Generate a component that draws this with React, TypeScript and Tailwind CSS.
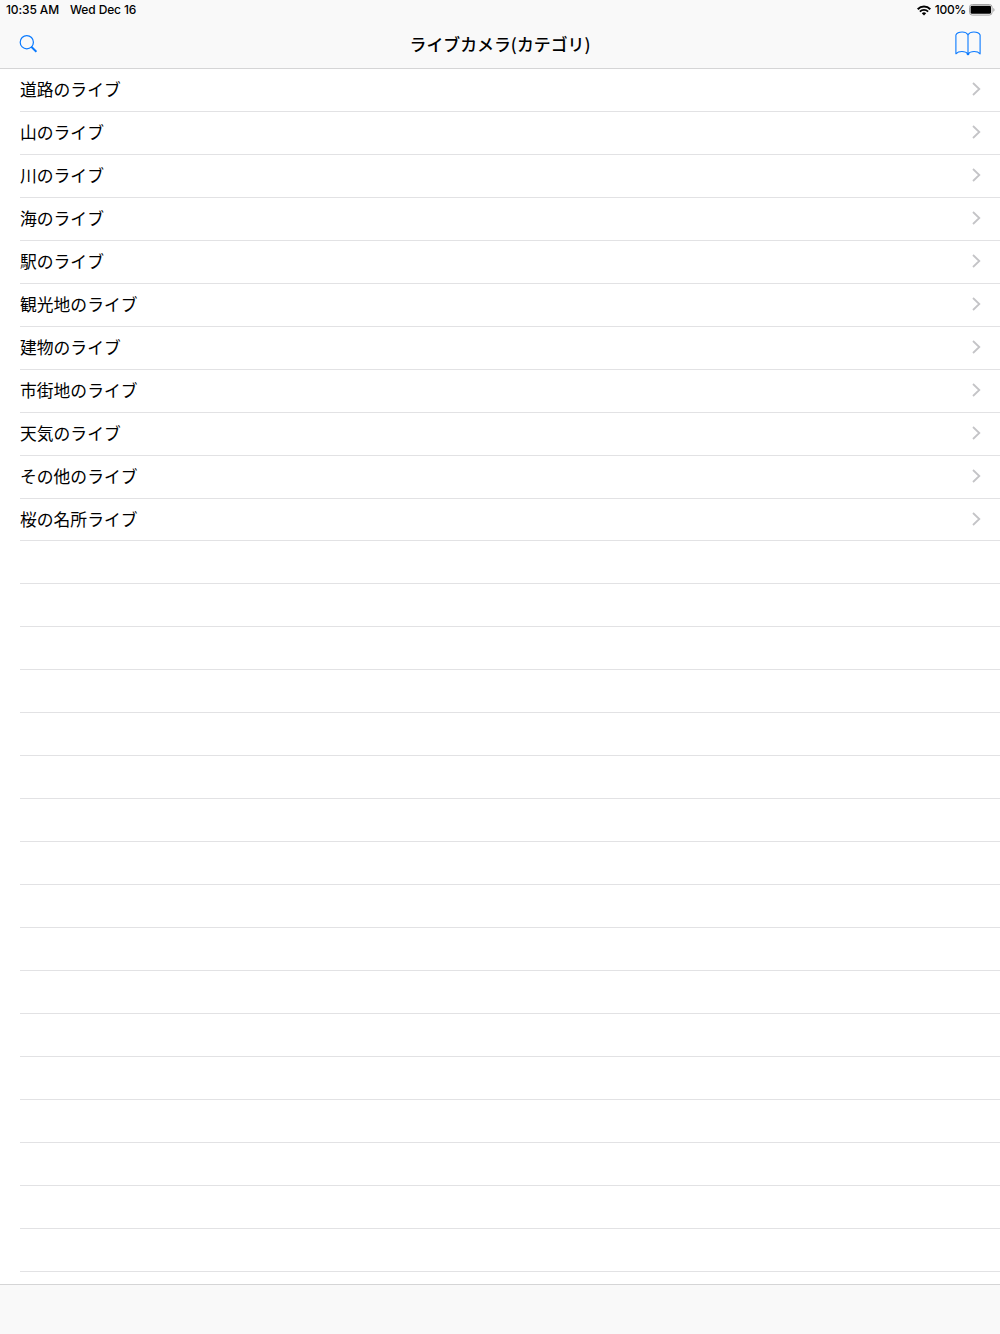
import React from "react";

const categories = [
  "道路のライブ",
  "山のライブ",
  "川のライブ",
  "海のライブ",
  "駅のライブ",
  "観光地のライブ",
  "建物のライブ",
  "市街地のライブ",
  "天気のライブ",
  "その他のライブ",
  "桜の名所ライブ",
];

// The table keeps drawing separators below the last category
const ROW_COUNT = 28;

const WifiIcon = () => (
  <svg className="w-[14px] h-[11px]" viewBox="0 0 14 11" fill="none">
    <path d="M0.7 4.2a8.9 8.9 0 0 1 12.6 0" stroke="#000" strokeWidth="2" />
    <path d="M2.9 6.6a5.8 5.8 0 0 1 8.2 0" stroke="#000" strokeWidth="1.8" />
    <path d="M7 10.5L4.8 8.3a3.1 3.1 0 0 1 4.4 0z" fill="#000" />
  </svg>
);

const BatteryIcon = () => (
  <svg className="w-[26px] h-[12px]" viewBox="0 0 26 12" fill="none">
    <rect x="0.5" y="0.5" width="22.6" height="10.6" rx="2.8" stroke="#a3a3a3" />
    <rect x="1.6" y="1.8" width="20.4" height="8" rx="1.4" fill="#000" />
    <path d="M24.3 4v3.7c.8-.3 1.2-1 1.2-1.8s-.4-1.6-1.2-1.9z" fill="#a3a3a3" />
  </svg>
);

const SearchIcon = () => (
  <svg className="w-[18px] h-[18px]" viewBox="0 0 18 18" fill="none" stroke="#0a7aff">
    <circle cx="7.8" cy="7.2" r="6.6" strokeWidth="1.2" />
    <path d="M12.3 11.7L17.4 16.8" strokeWidth="2" />
  </svg>
);

const BookIcon = () => (
  <svg
    className="w-[26px] h-[25px]"
    viewBox="0 0 26 25"
    fill="none"
    stroke="#0a7aff"
    strokeWidth="1.1"
    strokeLinejoin="round"
  >
    <path d="M13 3.7C11.8 1.9 9.6 1 7.2 1 4.4 1 1.8 2 .9 4v18.8c1.3-1.5 3.5-2.3 6-2.3 2.6 0 4.8.8 6.1 2.5 1.3-1.7 3.5-2.5 6.1-2.5 2.5 0 4.7.8 6 2.3V4C24.2 2 21.6 1 18.8 1 16.4 1 14.2 1.9 13 3.7z" />
    <path d="M13 3.7V23" />
    <circle cx="13" cy="23" r="0.8" fill="#0a7aff" />
  </svg>
);

const Chevron = () => (
  <svg className="w-[9px] h-[14px] mb-px" viewBox="0 0 9 14" fill="none">
    <path d="M1 1l6.3 6L1 13" stroke="#c4c4c7" strokeWidth="1.8" />
  </svg>
);

const App = () => {
  const rows = Array.from({ length: ROW_COUNT }, (_, i) => categories[i]);

  return (
    <div className="h-[1334px] w-full overflow-hidden flex flex-col bg-white text-black font-['Inter','Noto_Sans_CJK_JP',sans-serif]">
      <header className="h-[69px] shrink-0 bg-[#f9f9f9] border-b border-[#d5d5d6]">
        {/* Status bar */}
        <div className="h-5 pl-1.5 pr-[5px] flex items-center justify-between text-[12px] font-medium leading-5 tracking-[-0.12px]">
          <div className="flex gap-[11px]">
            <span>10:35 AM</span>
            <span>Wed Dec 16</span>
          </div>
          <div className="flex items-center">
            <WifiIcon />
            <span className="ml-1 mr-[3px] tracking-[-0.3px]">100%</span>
            <BatteryIcon />
          </div>
        </div>

        {/* Navigation bar */}
        <div className="h-[47px] px-[19px] grid grid-cols-[1fr_auto_1fr] items-center">
          <button aria-label="Search" className="justify-self-start">
            <SearchIcon />
          </button>
          <h1 className="text-[16.9px] leading-6 font-medium whitespace-nowrap font-['Noto_Sans_CJK_JP',sans-serif]">
            ライブカメラ(カテゴリ)
          </h1>
          <button aria-label="Bookmarks" className="justify-self-end">
            <BookIcon />
          </button>
        </div>
      </header>

      <ul className="flex-1 min-h-0 overflow-hidden">
        {rows.map((name, i) => (
          <li
            key={i}
            className="h-[42.955px] ml-5 pr-[19px] flex items-center justify-between border-b border-[#e2e2e4]"
          >
            {name && (
              <>
                <span className="pb-[2px] text-[16.8px] leading-6 font-['Noto_Sans_CJK_JP',sans-serif]">
                  {name}
                </span>
                <Chevron />
              </>
            )}
          </li>
        ))}
      </ul>

      <footer className="h-[50px] shrink-0 bg-[#f9f9f9] border-t border-[#d5d5d6]" />
    </div>
  );
};

export default App;
